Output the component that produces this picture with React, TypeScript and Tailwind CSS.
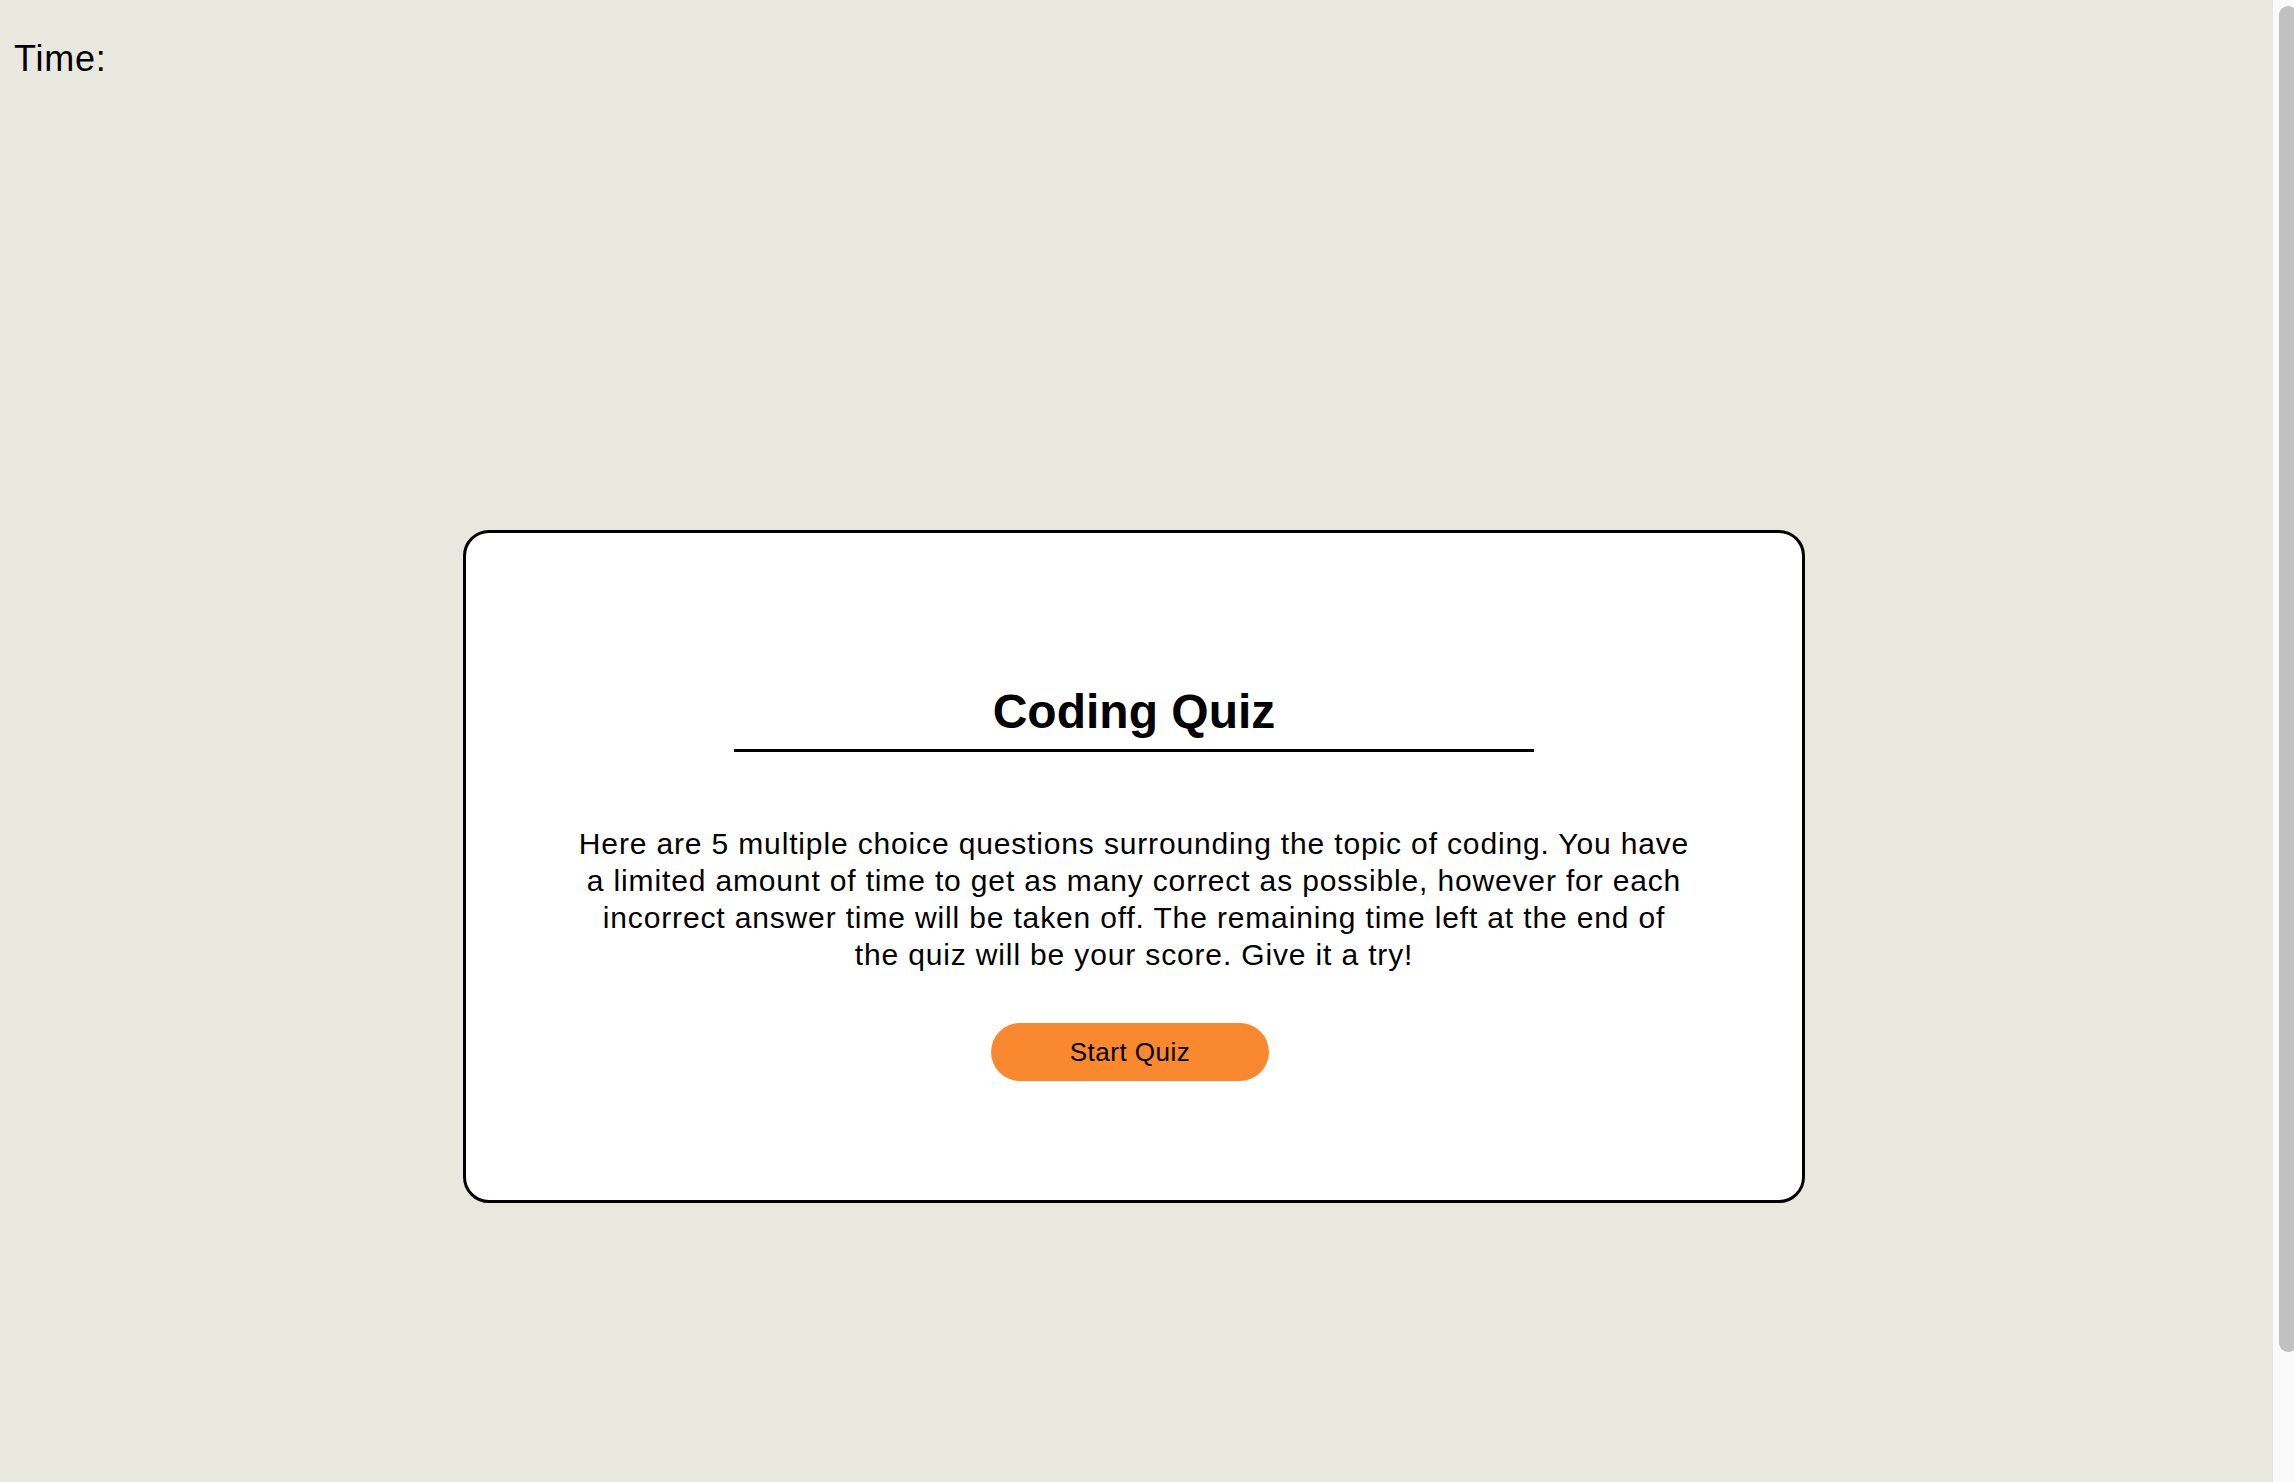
export default function App() {
  return (
    <div className="flex h-screen w-full overflow-hidden bg-[#e8e8de] font-['Liberation_Sans',Arial,sans-serif] text-black">
      <main className="flex flex-1 flex-col">
        <div className="pl-[14px] pt-[41px] text-[36px] leading-[36px] tracking-[0.8px]">Time:</div>

        <section className="ml-[463px] mt-[453px] flex w-[1342px] flex-col items-center rounded-[26px] border-[3px] border-black bg-white pb-[119px] pt-[155px]">
          <h1 className="w-[800px] border-b-[3px] border-black pb-[13px] text-center text-[48px] font-bold leading-[48px]">
            Coding Quiz
          </h1>
          <p className="mt-[73px] w-[1140px] text-center text-[30px] leading-[37px] tracking-[0.85px]">
            Here are 5 multiple choice questions surrounding the topic of coding. You have
            <br />
            a limited amount of time to get as many correct as possible, however for each
            <br />
            incorrect answer time will be taken off. The remaining time left at the end of
            <br />
            the quiz will be your score. Give it a try!
          </p>
          <button className="mr-[8px] mt-[50px] h-[58px] w-[278px] rounded-full bg-[#f9882f] text-[26px] leading-[26px] tracking-[0.5px]">
            Start Quiz
          </button>
        </section>
      </main>

      {/* scrollbar strip as seen in the screenshot */}
      <div className="h-full w-[22px] shrink-0 overflow-hidden border-l border-[#e6e6e6] bg-[#fafafa] pt-[6px]">
        <div className="ml-[6px] h-[1346px] w-[18px] rounded-full bg-[#c1c1c1]" />
      </div>
    </div>
  );
}
